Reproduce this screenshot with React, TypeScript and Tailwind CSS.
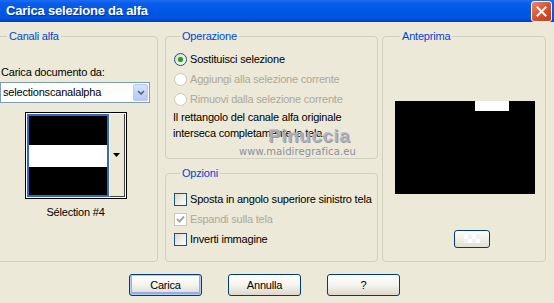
import React from "react";

function Radio({ checked, disabled, label }: { checked?: boolean; disabled?: boolean; label: string }) {
  return (
    <div className="h-[20px] flex items-center gap-[3px]">
      <span
        className={`w-[13px] h-[13px] rounded-full border flex items-center justify-center ${
          disabled ? "border-[#CAC8BB] bg-white" : "border-[#1C5180] bg-gradient-to-br from-[#DCD9CD] to-white"
        }`}
      >
        {checked && <span className="w-[5px] h-[5px] rounded-full bg-[#21A121] shadow-[0_0_1px_#62C762]" />}
      </span>
      <span className={disabled ? "text-[#ACA899]" : "text-black"}>{label}</span>
    </div>
  );
}

function Check({ checked, disabled, label }: { checked?: boolean; disabled?: boolean; label: string }) {
  return (
    <div className="h-[20px] flex items-center gap-[3px]">
      <span
        className={`w-[13px] h-[13px] border flex items-center justify-center ${
          disabled ? "border-[#CAC8BB] bg-white" : "border-[#1C5180] bg-gradient-to-br from-[#DCD9CD] to-white"
        }`}
      >
        {checked && (
          <svg width="9" height="9" viewBox="0 0 9 9">
            <path d="M1 4 L3.5 6.5 L8 1.5" stroke={disabled ? "#ACA899" : "#21A121"} strokeWidth="2" fill="none" />
          </svg>
        )}
      </span>
      <span className={disabled ? "text-[#ACA899]" : "text-black"}>{label}</span>
    </div>
  );
}

function Btn({ label, primary }: { label: string; primary?: boolean }) {
  return (
    <button
      className={`w-[73px] h-[22px] rounded-[3px] border border-[#003C74] bg-gradient-to-b from-white via-[#F4F3EE] to-[#DCD8CC] text-black leading-none ${
        primary ? "shadow-[inset_0_0_0_1px_#B6CCF5,inset_0_-1px_0_2px_#8FAEEA]" : ""
      }`}
    >
      {label}
    </button>
  );
}

export default function App() {
  return (
    <div className="relative w-[554px] h-[303px] overflow-hidden bg-[#ECE9D8] font-['Liberation_Sans',Arial,sans-serif] text-[11px] tracking-[-0.2px] text-black">
      {/* title bar */}
      <div className="h-[22px] flex items-center justify-between pl-[6px] pr-[2px] bg-[linear-gradient(to_bottom,#1D6DF2_0%,#0A5DEB_15%,#0055E3_60%,#0052DE_85%,#0041C0_100%)]">
        <span className="text-white font-bold text-[13px] tracking-[-0.2px] [text-shadow:1px_1px_0_#0B2F8F]">
          Carica selezione da alfa
        </span>
        <div className="w-[21px] h-[21px] rounded-[3px] border border-white bg-gradient-to-br from-[#E9876A] via-[#D9532F] to-[#C1391A] flex items-center justify-center">
          <svg width="11" height="11" viewBox="0 0 11 11">
            <path d="M1.5 1.5 L9.5 9.5 M9.5 1.5 L1.5 9.5" stroke="white" strokeWidth="2" strokeLinecap="square" />
          </svg>
        </div>
      </div>

      {/* body */}
      <div className="flex pt-[8px]">
        <fieldset className="ml-[-8px] w-[166px] h-[232px] border border-[#D0D0BF] rounded-[4px] pl-[7px] pt-[23px]">
          <legend className="ml-[7px] px-[2px] leading-[13px] text-[#0046D5]">Canali alfa</legend>
          <div className="w-[151px] flex flex-col">
            <div className="leading-[13px] pl-[1px]">Carica documento da:</div>
            <div className="mt-[3px] w-[150px] h-[21px] border border-[#7F9DB9] bg-white flex items-center justify-between pl-[2px] pr-[1px]">
              <span>selectionscanalalpha</span>
              <span className="w-[15px] h-[17px] rounded-[2px] border border-[#B9CBF3] bg-gradient-to-b from-[#D7E3FD] to-[#B4C8F6] flex items-center justify-center">
                <svg width="8" height="5" viewBox="0 0 8 5">
                  <path d="M1 1 L4 4 L7 1" stroke="#4D6185" strokeWidth="1.6" fill="none" />
                </svg>
              </span>
            </div>
            <div className="self-center mt-[9px] w-[102px] h-[87px] border border-black bg-white p-[1px] flex">
              <div className="w-[82px] h-full border-2 border-[#316AC5] flex flex-col">
                <div className="h-[29px] bg-black" />
                <div className="h-[22px] bg-white" />
                <div className="flex-1 bg-black" />
              </div>
              <div className="flex-1 bg-[#ECE9D8] border-r border-b border-[#404040] border-l border-l-white flex items-center justify-center">
                <svg width="7" height="4" viewBox="0 0 7 4">
                  <path d="M0 0 H7 L3.5 4 Z" fill="black" />
                </svg>
              </div>
            </div>
            <div className="mt-[7px] leading-[13px] text-center">Sélection #4</div>
          </div>
        </fieldset>

        <div className="ml-[7px] w-[213px] flex flex-col">
          <fieldset className="h-[129px] border border-[#D0D0BF] rounded-[4px] pl-[8px] pt-[6px]">
            <legend className="ml-[6px] px-[2px] leading-[13px] text-[#0046D5]">Operazione</legend>
            <Radio checked label="Sostituisci selezione" />
            <Radio disabled label="Aggiungi alla selezione corrente" />
            <Radio disabled label="Rimuovi dalla selezione corrente" />
            <p className="leading-[16px] ml-[-1px]">
              Il rettangolo del canale alfa originale
              <br />
              interseca completamente la tela.
            </p>
          </fieldset>
          <fieldset className="mt-[8px] h-[95px] border border-[#D0D0BF] rounded-[4px] pl-[8px] pt-[9px]">
            <legend className="ml-[6px] px-[2px] leading-[13px] text-[#0046D5]">Opzioni</legend>
            <Check label="Sposta in angolo superiore sinistro tela" />
            <Check checked disabled label="Espandi sulla tela" />
            <Check label="Inverti immagine" />
          </fieldset>
        </div>

        <fieldset className="ml-[4px] w-[164px] h-[232px] border border-[#D0D0BF] rounded-[4px] pl-[12px] pt-[58px]">
          <legend className="ml-[5px] px-[2px] leading-[13px] text-[#0046D5]">Anteprima</legend>
          <div className="w-[140px] h-[93px] bg-black pl-[80px]">
            <div className="w-[34px] h-[10px] bg-white" />
          </div>
          <div className="ml-[59px] mt-[36px] w-[36px] h-[18px] rounded-[3px] border border-[#003C74] bg-gradient-to-b from-white to-[#E2DFD4] flex items-center justify-center">
            <div className="w-[16px] h-[8px] bg-[repeating-conic-gradient(#F2F2F2_0_25%,#FFFFFF_0_50%)] bg-[length:8px_8px]" />
          </div>
        </fieldset>
      </div>

      {/* buttons */}
      <div className="flex gap-[26px] pl-[129px] mt-[12px]">
        <Btn label="Carica" primary />
        <Btn label="Annulla" />
        <Btn label="?" />
      </div>

      {/* watermark */}
      <div className="absolute left-[268px] top-[122px] text-[19px] font-bold tracking-[0.5px] text-[#B4B4BE]/80 [text-shadow:1px_1px_0_#9A9AA6] pointer-events-none">
        Pinuccia
      </div>
      <div className="absolute left-[239px] top-[144px] font-['DejaVu_Sans',sans-serif] text-[10px] tracking-[0.1px] text-[#8E8E9E] pointer-events-none">
        www.maidiregrafica.eu
      </div>
    </div>
  );
}
